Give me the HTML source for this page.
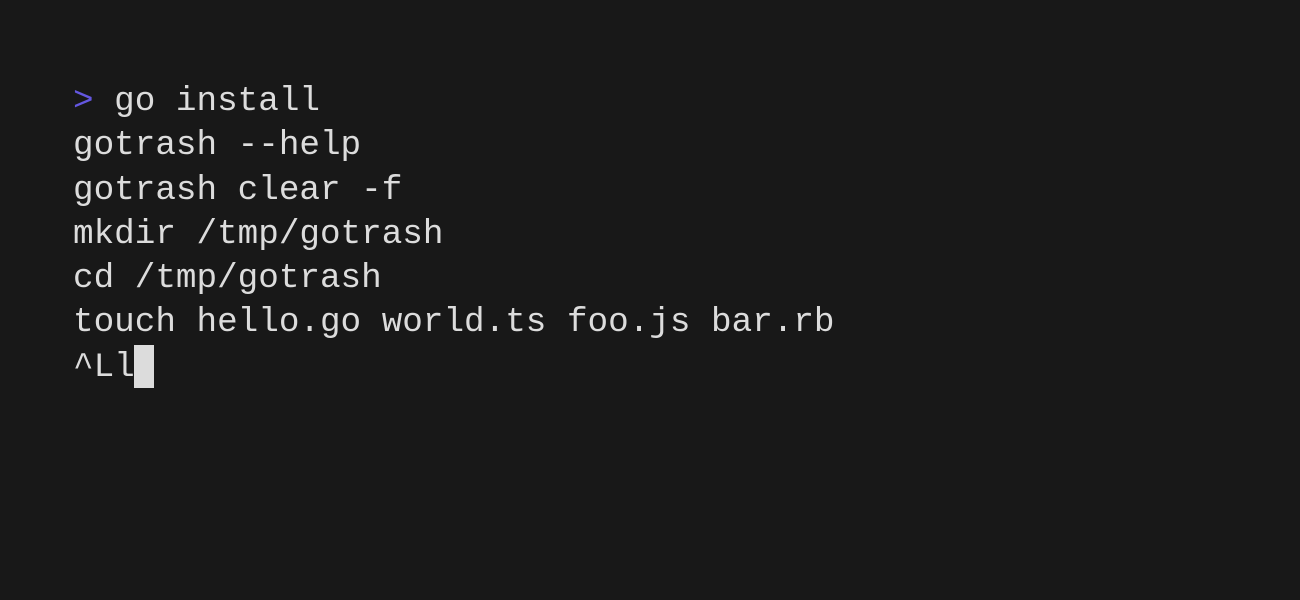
<!DOCTYPE html>
<html><head><style>
html,body{margin:0;padding:0;background:#181818;width:1300px;height:600px;overflow:hidden}
pre{position:absolute;left:73px;top:80px;margin:0;font-family:"Liberation Mono","DejaVu Sans Mono",monospace;font-size:34.3px;line-height:44.3px;color:#dcdcdc;letter-spacing:0}
.p{color:#6457e0}
.c{display:inline-block;width:20.6px;height:43px;background:#dcdcdc;vertical-align:top;margin-top:-1px;margin-left:-1px}
</style></head><body>
<pre><span class="p">&gt;</span> go install
gotrash --help
gotrash clear -f
mkdir /tmp/gotrash
cd /tmp/gotrash
touch hello.go world.ts foo.js bar.rb
^Ll<span class="c"></span></pre>
</body></html>
